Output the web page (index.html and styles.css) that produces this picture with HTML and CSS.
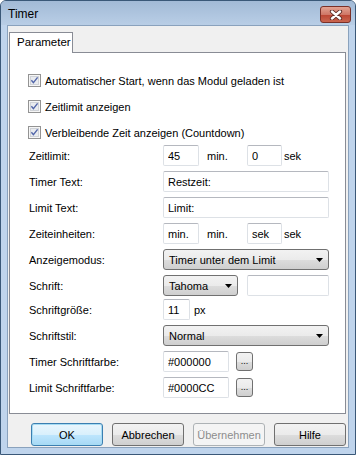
FILE: index.html
```html
<!DOCTYPE html>
<html lang="de">
<head>
  <meta charset="UTF-8">
  <title>Timer</title>
  <link rel="stylesheet" href="styles.css">
</head>
<body>
  <div class="window">
    <div class="titlebar">
      <span class="title">Timer</span>
      <button class="close" aria-label="Schließen">
        <svg width="14" height="10" viewBox="0 0 14 10">
          <path d="M3 1.5 L11 8.5 M11 1.5 L3 8.5" stroke="#5a2a24" stroke-width="4.2" stroke-linecap="round"/>
          <path d="M3 1.5 L11 8.5 M11 1.5 L3 8.5" stroke="#ffffff" stroke-width="2.4" stroke-linecap="round"/>
        </svg>
      </button>
    </div>

    <div class="client">
      <div class="tabs">
        <div class="tab">Parameter</div>
      </div>

      <div class="panel">
        <div class="checks">
          <label class="check">
            <svg class="cb" width="13" height="13" viewBox="0 0 13 13">
              <rect x="0.5" y="0.5" width="12" height="12" fill="#f6f6f6" stroke="#939393"/>
              <rect x="2.5" y="2.5" width="8" height="8" fill="#e9ebef" stroke="#cfd2d7"/>
              <path d="M3.4 6.3 L5.4 8.6 L9.6 3.4" fill="none" stroke="#5064a8" stroke-width="1.4"/>
            </svg>
            <span>Automatischer Start, wenn das Modul geladen ist</span>
          </label>
          <label class="check">
            <svg class="cb" width="13" height="13" viewBox="0 0 13 13">
              <rect x="0.5" y="0.5" width="12" height="12" fill="#f6f6f6" stroke="#939393"/>
              <rect x="2.5" y="2.5" width="8" height="8" fill="#e9ebef" stroke="#cfd2d7"/>
              <path d="M3.4 6.3 L5.4 8.6 L9.6 3.4" fill="none" stroke="#5064a8" stroke-width="1.4"/>
            </svg>
            <span>Zeitlimit anzeigen</span>
          </label>
          <label class="check">
            <svg class="cb" width="13" height="13" viewBox="0 0 13 13">
              <rect x="0.5" y="0.5" width="12" height="12" fill="#f6f6f6" stroke="#939393"/>
              <rect x="2.5" y="2.5" width="8" height="8" fill="#e9ebef" stroke="#cfd2d7"/>
              <path d="M3.4 6.3 L5.4 8.6 L9.6 3.4" fill="none" stroke="#5064a8" stroke-width="1.4"/>
            </svg>
            <span>Verbleibende Zeit anzeigen (Countdown)</span>
          </label>
        </div>

        <div class="row">
          <span class="lbl">Zeitlimit:</span>
          <input class="field num" value="45">
          <span class="unit">min.</span>
          <input class="field num2" value="0">
          <span class="unit2">sek</span>
        </div>
        <div class="row">
          <span class="lbl">Timer Text:</span>
          <input class="field wide" value="Restzeit:">
        </div>
        <div class="row">
          <span class="lbl">Limit Text:</span>
          <input class="field wide" value="Limit:">
        </div>
        <div class="row">
          <span class="lbl">Zeiteinheiten:</span>
          <input class="field num" value="min.">
          <span class="unit">min.</span>
          <input class="field num2" value="sek">
          <span class="unit2">sek</span>
        </div>
        <div class="row">
          <span class="lbl">Anzeigemodus:</span>
          <div class="dropdown wide">
            <span>Timer unter dem Limit</span>
            <svg width="7" height="4" viewBox="0 0 7 4"><path d="M0 0 H7 L3.5 4 Z" fill="#000"/></svg>
          </div>
        </div>
        <div class="row row-tight">
          <span class="lbl">Schrift:</span>
          <div class="dropdown font">
            <span>Tahoma</span>
            <svg width="7" height="4" viewBox="0 0 7 4"><path d="M0 0 H7 L3.5 4 Z" fill="#000"/></svg>
          </div>
          <input class="field fontname" value="">
        </div>
        <div class="row">
          <span class="lbl">Schriftgröße:</span>
          <input class="field size" value="11">
          <span class="px">px</span>
        </div>
        <div class="row">
          <span class="lbl">Schriftstil:</span>
          <div class="dropdown wide">
            <span>Normal</span>
            <svg width="7" height="4" viewBox="0 0 7 4"><path d="M0 0 H7 L3.5 4 Z" fill="#000"/></svg>
          </div>
        </div>
        <div class="row">
          <span class="lbl">Timer Schriftfarbe:</span>
          <input class="field color" value="#000000">
          <button class="pick">...</button>
        </div>
        <div class="row">
          <span class="lbl">Limit Schriftfarbe:</span>
          <input class="field color" value="#0000CC">
          <button class="pick">...</button>
        </div>
      </div>

      <div class="buttons">
        <button class="btn default">OK</button>
        <button class="btn">Abbrechen</button>
        <button class="btn" disabled>Übernehmen</button>
        <button class="btn">Hilfe</button>
      </div>
    </div>
  </div>
</body>
</html>
```

FILE: styles.css
```css
body {
  margin: 0;
  font-family: "Liberation Sans", Arial, sans-serif;
  font-size: 11px;
  color: #000;
  background: #fff;
}

.window {
  width: 356px;
  height: 455px;
  box-sizing: border-box;
  border: 1px solid #3a5878;
  border-radius: 6px 6px 0 0;
  background: #bfd4ec;
  display: flex;
  flex-direction: column;
}

.titlebar {
  height: 24px;
  display: flex;
  align-items: center;
  justify-content: space-between;
  padding: 0 4px 0 7px;
  background: linear-gradient(#a2bad6, #b9cee6);
  border-radius: 5px 5px 0 0;
}

.title {
  font-size: 12px;
  margin-top: 2px;
}

.close {
  width: 31px;
  height: 17px;
  margin-top: 3px;
  padding: 0;
  border: 1px solid #7a3028;
  border-radius: 3px;
  background: linear-gradient(#e3a393, #cf7767 50%, #bb4432 51%, #c9654f);
  display: flex;
  align-items: center;
  justify-content: center;
}

.client {
  flex: 1;
  margin: 0 6px 6px;
  border: 1px solid #8aa2bd;
  background: #f0f0f0;
  display: flex;
  flex-direction: column;
}

.tabs {
  display: flex;
  margin: 6px 0 0 1px;
}

.tab {
  position: relative;
  z-index: 1;
  width: 64px;
  height: 21px;
  box-sizing: border-box;
  margin-bottom: -1px;
  padding: 3px 0 0 7px;
  border: 1px solid #898c95;
  border-bottom: none;
  background: #fff;
  font-size: 11.5px;
}

.panel {
  width: 337px;
  height: 362px;
  box-sizing: border-box;
  margin-left: 1px;
  padding: 21px 0 0 18px;
  border: 1px solid #898c95;
  background: #fff;
}

.checks {
  display: flex;
  flex-direction: column;
  gap: 13px;
  margin-bottom: 6px;
}

.check {
  display: flex;
  align-items: center;
  height: 13px;
  gap: 4px;
}

.cb {
  flex: none;
}

.row {
  display: flex;
  align-items: center;
  height: 21px;
  margin-bottom: 5px;
}

.row-tight {
  margin-bottom: 3px;
}

.lbl {
  width: 135px;
  flex: none;
  padding-left: 1px;
  box-sizing: border-box;
}

.field {
  height: 21px;
  box-sizing: border-box;
  margin: 0;
  padding: 0 0 0 4px;
  border: 1px solid #dde1e6;
  border-top-color: #b5b8bf;
  border-radius: 2px;
  font: inherit;
  font-size: 11px;
  color: #000;
  background: #fff;
}

.num {
  width: 36px;
}

.num2 {
  width: 35px;
}

.unit {
  width: 48px;
  padding-left: 8px;
  box-sizing: border-box;
}

.unit2 {
  margin-left: 2px;
}

.wide {
  width: 166px;
}

.dropdown {
  height: 21px;
  box-sizing: border-box;
  display: flex;
  align-items: center;
  justify-content: space-between;
  padding: 0 5px 0 5px;
  border: 1px solid #707070;
  border-radius: 3px;
  background: linear-gradient(#f2f2f2, #ebebeb 50%, #dddddd 51%, #cfcfcf);
  font-size: 11px;
}

.font {
  width: 75px;
}

.fontname {
  width: 82px;
  margin-left: 9px;
}

.size {
  width: 27px;
}

.px {
  margin-left: 4px;
}

.color {
  width: 66px;
}

.pick {
  width: 17px;
  height: 19px;
  margin-left: 7px;
  padding: 0 0 4px;
  border: 1px solid #707070;
  border-radius: 3px;
  background: linear-gradient(#f2f2f2, #ebebeb 50%, #dddddd 51%, #cfcfcf);
  font: inherit;
  font-size: 9px;
  line-height: 1;
  display: flex;
  align-items: flex-end;
  justify-content: center;
}

.buttons {
  display: flex;
  justify-content: flex-end;
  gap: 9px;
  margin: 9px 2px 0 0;
}

.btn {
  width: 72px;
  height: 23px;
  padding: 0;
  border: 1px solid #707070;
  border-radius: 3px;
  background: linear-gradient(#f2f2f2, #ebebeb 50%, #dddddd 51%, #cfcfcf);
  font: inherit;
  font-size: 11px;
  color: #000;
}

.btn.default {
  border-color: #3c7fb1;
  box-shadow: inset 0 0 0 1px #a7dcf3;
  background: linear-gradient(#eaf6fd, #d9f0fc 50%, #bee6fd 51%, #a7d9f5);
}

.btn:disabled {
  border-color: #adb2b5;
  background: #f4f4f4;
  color: #8d8d8d;
}
```
